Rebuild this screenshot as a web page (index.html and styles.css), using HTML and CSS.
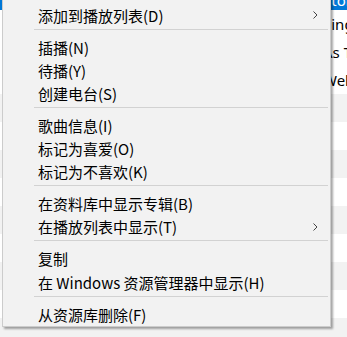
FILE: index.html
```html
<!DOCTYPE html>
<html lang="zh-CN">
<head>
    <meta charset="UTF-8">
    <title>歌曲菜单</title>
    <link rel="stylesheet" href="styles.css">
</head>
<body>
    <div class="list">
        <div class="row selected"><span class="title">Story</span></div>
        <div class="row"><span class="title">Sing</span></div>
        <div class="row"><span class="title">As Time</span></div>
        <div class="row"><span class="title">Welcome</span></div>
        <div class="row"><span class="title"></span></div>
        <div class="row"><span class="title"></span></div>
        <div class="row"><span class="title"></span></div>
        <div class="row"><span class="title"></span></div>
        <div class="row"><span class="title"></span></div>
        <div class="row"><span class="title"></span></div>
        <div class="row"><span class="title"></span></div>
        <div class="row"><span class="title"></span></div>
        <div class="row"><span class="title"></span></div>
    </div>

    <div class="menu">
        <div class="item">添加到播放列表(D)<svg class="arrow" viewBox="0 0 5 8"><polyline points="0.5,0.5 4,4 0.5,7.5"/></svg></div>
        <div class="sep"></div>
        <div class="item">插播(N)</div>
        <div class="item">待播(Y)</div>
        <div class="item">创建电台(S)</div>
        <div class="sep"></div>
        <div class="item">歌曲信息(I)</div>
        <div class="item">标记为喜爱(O)</div>
        <div class="item">标记为不喜欢(K)</div>
        <div class="sep"></div>
        <div class="item">在资料库中显示专辑(B)</div>
        <div class="item">在播放列表中显示(T)<svg class="arrow" viewBox="0 0 5 8"><polyline points="0.5,0.5 4,4 0.5,7.5"/></svg></div>
        <div class="sep"></div>
        <div class="item">复制</div>
        <div class="item">在 Windows 资源管理器中显示(H)</div>
        <div class="sep"></div>
        <div class="item">从资源库删除(F)</div>
    </div>
</body>
</html>
```

FILE: styles.css
```css
body {
    margin: 0;
    width: 347px;
    height: 337px;
    overflow: hidden;
    position: relative;
    background: #ffffff;
    font-family: "Noto Sans CJK SC", "Noto Sans", sans-serif;
}
.list {
    display: flex;
    flex-direction: column;
}
.row {
    height: 28px;
    display: flex;
    align-items: center;
    font-family: "Noto Sans", "Liberation Sans", sans-serif;
    font-size: 15px;
    color: #000;
    white-space: nowrap;
}
.row:nth-child(2n+5) {
    background: #f2f2f2;
}
.row.selected {
    height: 10px;
    background: #0078d7;
    color: #fff;
    align-items: flex-end;
    overflow: hidden;
}
.title {
    padding-left: 323px;
    line-height: 20px;
}
.menu {
    position: absolute;
    left: 2px;
    top: -10px;
    width: 327px;
    padding: 12.6px 0 0;
    background: #f2f2f2;
    border: 1px solid #cccccc;
    box-shadow: 2px 2px 2px rgba(0, 0, 0, 0.35);
}
.item {
    height: 23.1px;
    display: flex;
    align-items: center;
    padding-left: 35px;
    padding-right: 12px;
    font-size: 15px;
    color: #000;
    white-space: nowrap;
}
.arrow {
    margin-left: auto;
    width: 5px;
    height: 8px;
    fill: none;
    stroke: #444;
    stroke-width: 1;
}
.sep {
    height: 1px;
    margin: 2px 2px 6px 31px;
    background: #d2d2d2;
}
```
